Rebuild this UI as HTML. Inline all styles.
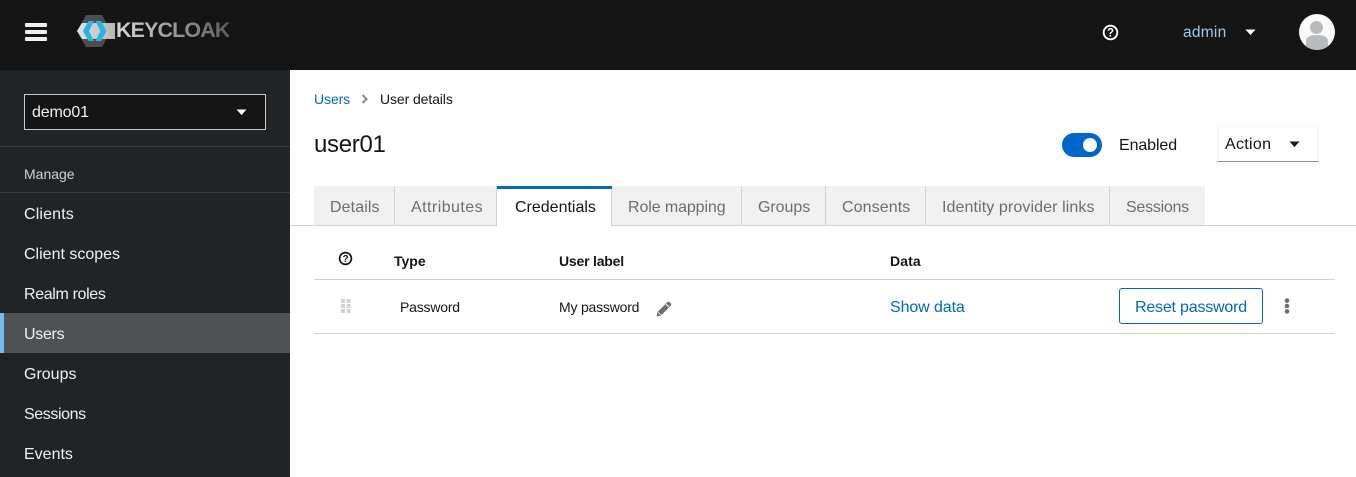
<!DOCTYPE html>
<html lang="en"><head><meta charset="utf-8"><title>Keycloak</title>
<style>
html,body{margin:0;padding:0}
body{width:1356px;height:477px;overflow:hidden;position:relative;background:#fff;font-family:"Liberation Sans",sans-serif;color:#151515}
.a{position:absolute;white-space:nowrap;line-height:20px}
.b{position:absolute}
.nav{color:#f0f0f0;font-size:16px;left:24px}
.tt{color:#6a6e73;font-size:16px;top:198px}
.bar{left:25px;width:22px;height:4px;background:#f0f0f0;border-radius:1px}
svg{position:absolute;display:block}
</style></head><body>
<div class="b" style="left:0;top:0;width:1356px;height:70px;background:#151515"></div>
<div class="b bar" style="top:23px"></div>
<div class="b bar" style="top:30px"></div>
<div class="b bar" style="top:37px"></div>

<svg style="left:76px;top:14px" width="46" height="34" viewBox="0 0 46 34">
<defs><linearGradient id="g" x1="0" x2="1" y1="0" y2="0"><stop offset="0" stop-color="#e2e2e2"/><stop offset="1" stop-color="#b5b5b5"/></linearGradient></defs>
<path d="M10 1H26L35 17L26 33H10L1 17Z" fill="#4d4d4d"/>
<path d="M6 9H39V25H6L1 17Z" fill="url(#g)"/>
<path d="M12.500 7H18L13 17L18 27H12.500L7 17Z" fill="#22b5e6"/>
<path d="M19.500 7H25L30.500 17L25 27H19.500L24.500 17Z" fill="#22b5e6"/>
</svg>
<div class="a" style="left:116px;top:19px;font-size:21.500px;line-height:22px;font-weight:700;letter-spacing:-.9px;background:linear-gradient(90deg,#d8d8d8,#5e5e5e);-webkit-background-clip:text;background-clip:text;color:transparent">KEYCLOAK</div>

<svg style="left:1102px;top:24px" width="17" height="17" viewBox="0 0 17 17"><circle cx="8.500" cy="8.500" r="6.800" fill="none" stroke="#fff" stroke-width="1.900"/><text x="8.500" y="12.500" text-anchor="middle" font-size="11.500" font-weight="700" fill="#fff" font-family="Liberation Sans">?</text></svg>
<div class="a" style="left:1183px;top:23px;font-size:15.500px;color:#9fc9ee;letter-spacing:.25px">admin</div>
<svg style="left:1245px;top:29px" width="11" height="7" viewBox="0 0 11 7"><path d="M.5 .5H10.500L5.500 6Z" fill="#fff"/></svg>
<svg style="left:1299px;top:14px" width="36" height="36" viewBox="0 0 36 36"><defs><clipPath id="c"><circle cx="18" cy="18" r="18"/></clipPath></defs><circle cx="18" cy="18" r="18" fill="#fafafa"/><g clip-path="url(#c)" fill="#b8bbbe"><circle cx="17.500" cy="13.500" r="6.500"/><path d="M7 36V27C7 23 11 21 18 21S29 23 29 27V36Z"/></g></svg>

<div class="b" style="left:0;top:70px;width:290px;height:407px;background:#212427"></div>
<div class="b" style="left:24px;top:94px;width:240px;height:34px;background:#151515;border:1px solid #c8c8c8"></div>
<div class="a" style="left:32px;top:103px;font-size:16px;color:#f0f0f0;letter-spacing:-.15px">demo01</div>
<svg style="left:236px;top:109px" width="11" height="7" viewBox="0 0 11 7"><path d="M.5 .5H10.500L5.500 6Z" fill="#fff"/></svg>
<div class="b" style="left:0;top:146px;width:290px;height:1px;background:#3c3f42"></div>
<div class="a" style="left:24px;top:164px;font-size:14px;color:#d2d2d2">Manage</div>
<div class="b" style="left:0;top:192px;width:290px;height:1px;background:#3c3f42"></div>
<div class="b" style="left:0;top:313px;width:290px;height:40px;background:#4f5255"></div>
<div class="b" style="left:0;top:313px;width:4px;height:40px;background:#73bcf7"></div>
<div class="a nav" style="top:205px;letter-spacing:.15px">Clients</div>
<div class="a nav" style="top:245px">Client scopes</div>
<div class="a nav" style="top:285px;letter-spacing:-.35px">Realm roles</div>
<div class="a nav" style="top:325px;letter-spacing:-.3px">Users</div>
<div class="a nav" style="top:365px">Groups</div>
<div class="a nav" style="top:405px;letter-spacing:-.4px">Sessions</div>
<div class="a nav" style="top:445px">Events</div>

<div class="a" style="left:314px;top:89px;font-size:14px;color:#06c;letter-spacing:-.1px">Users</div>
<svg style="left:361px;top:94px" width="7" height="10" viewBox="0 0 7 10"><path d="M1.500 1L5.500 5L1.500 9" fill="none" stroke="#8a8d90" stroke-width="2.200"/></svg>
<div class="a" style="left:380px;top:89px;font-size:14px;color:#151515;letter-spacing:-.1px">User details</div>
<div class="a" style="left:314px;top:130px;font-size:24px;line-height:30px;color:#151515;letter-spacing:-.3px">user01</div>

<div class="b" style="left:1062px;top:133px;width:40px;height:24px;border-radius:12px;background:#06c"></div>
<div class="b" style="left:1083px;top:138px;width:14px;height:14px;border-radius:50%;background:#fff"></div>
<div class="a" style="left:1119px;top:136px;font-size:16px;color:#151515;letter-spacing:-.1px">Enabled</div>
<div class="b" style="left:1217px;top:126px;width:100px;height:34px;border:1px solid #f0f0f0;border-bottom:1px solid #8a8d90"></div>
<div class="a" style="left:1225px;top:135px;font-size:16px;color:#151515;letter-spacing:.3px">Action</div>
<svg style="left:1289px;top:141px" width="11" height="7" viewBox="0 0 11 7"><path d="M.5 .5H10.500L5.500 6Z" fill="#151515"/></svg>

<div class="b" style="left:290px;top:225px;width:1066px;height:1px;background:#d2d2d2"></div>
<div class="b" style="left:314px;top:186px;width:891px;height:39px;background:#f0f0f0"></div>
<div class="b" style="left:394px;top:186px;width:1px;height:39px;background:#d2d2d2"></div>
<div class="b" style="left:741px;top:186px;width:1px;height:39px;background:#d2d2d2"></div>
<div class="b" style="left:825px;top:186px;width:1px;height:39px;background:#d2d2d2"></div>
<div class="b" style="left:925px;top:186px;width:1px;height:39px;background:#d2d2d2"></div>
<div class="b" style="left:1109px;top:186px;width:1px;height:39px;background:#d2d2d2"></div>
<div class="b" style="left:497px;top:186px;width:114px;height:40px;background:#fff;border-right:1px solid #d2d2d2;border-left:1px solid #d2d2d2;margin-left:-1px"></div>
<div class="b" style="left:497px;top:186px;width:115px;height:3px;background:#06c"></div>
<div class="a tt" style="left:330px;letter-spacing:.1px">Details</div>
<div class="a tt" style="left:411px;letter-spacing:.45px">Attributes</div>
<div class="a tt" style="left:515px;color:#151515">Credentials</div>
<div class="a tt" style="left:628px;letter-spacing:-.1px">Role mapping</div>
<div class="a tt" style="left:758px;letter-spacing:-.05px">Groups</div>
<div class="a tt" style="left:842px;letter-spacing:.1px">Consents</div>
<div class="a tt" style="left:942px;letter-spacing:.1px">Identity provider links</div>
<div class="a tt" style="left:1126px;letter-spacing:-.25px">Sessions</div>

<svg style="left:338px;top:251px" width="15" height="15" viewBox="0 0 15 15"><circle cx="7.500" cy="7.500" r="5.900" fill="none" stroke="#151515" stroke-width="1.700"/><text x="7.500" y="11" text-anchor="middle" font-size="10" font-weight="700" fill="#151515" font-family="Liberation Sans">?</text></svg>
<div class="a" style="left:394px;top:251px;font-size:14px;font-weight:700;color:#151515">Type</div>
<div class="a" style="left:559px;top:251px;font-size:14px;font-weight:700;color:#151515;letter-spacing:-.2px">User label</div>
<div class="a" style="left:890px;top:251px;font-size:14px;font-weight:700;color:#151515;letter-spacing:.1px">Data</div>
<div class="b" style="left:314px;top:279px;width:1021px;height:1px;background:#d2d2d2"></div>
<svg style="left:341px;top:299px" width="11" height="15" viewBox="0 0 11 15" fill="#d2d2d2"><rect x="0" y="0" width="4" height="4"/><rect x="5.500" y="0" width="4" height="4"/><rect x="0" y="5" width="4" height="4"/><rect x="5.500" y="5" width="4" height="4"/><rect x="0" y="10" width="4" height="4"/><rect x="5.500" y="10" width="4" height="4"/></svg>
<div class="a" style="left:400px;top:297px;font-size:14px;color:#151515;letter-spacing:-.2px">Password</div>
<div class="a" style="left:559px;top:297px;font-size:14px;color:#151515;letter-spacing:-.2px">My password</div>
<svg style="left:655px;top:300px" width="18" height="18" viewBox="0 0 18 18"><path d="M1.500 16.500L2.500 12L12 2.500C13 1.500 14 1.500 15 2.500L15.500 3C16.500 4 16.500 5 15.500 6L6 15.500Z" fill="#6a6e73"/><path d="M11 4L14 7" stroke="#fff" stroke-width="1"/><path d="M3 12L6 15" stroke="#fff" stroke-width=".8"/></svg>
<div class="a" style="left:890px;top:298px;font-size:16px;color:#06c;letter-spacing:-.1px">Show data</div>
<div class="b" style="left:1119px;top:288px;width:142px;height:34px;border:1px solid #06c;border-radius:3px"></div>
<div class="a" style="left:1135px;top:298px;font-size:16px;color:#06c;letter-spacing:-.2px">Reset password</div>
<svg style="left:1283px;top:298px" width="8" height="16" viewBox="0 0 8 16" fill="#6a6e73"><circle cx="4" cy="2.600" r="2.300"/><circle cx="4" cy="8" r="2.300"/><circle cx="4" cy="13.400" r="2.300"/></svg>
<div class="b" style="left:314px;top:333px;width:1021px;height:1px;background:#d2d2d2"></div>
</body></html>
